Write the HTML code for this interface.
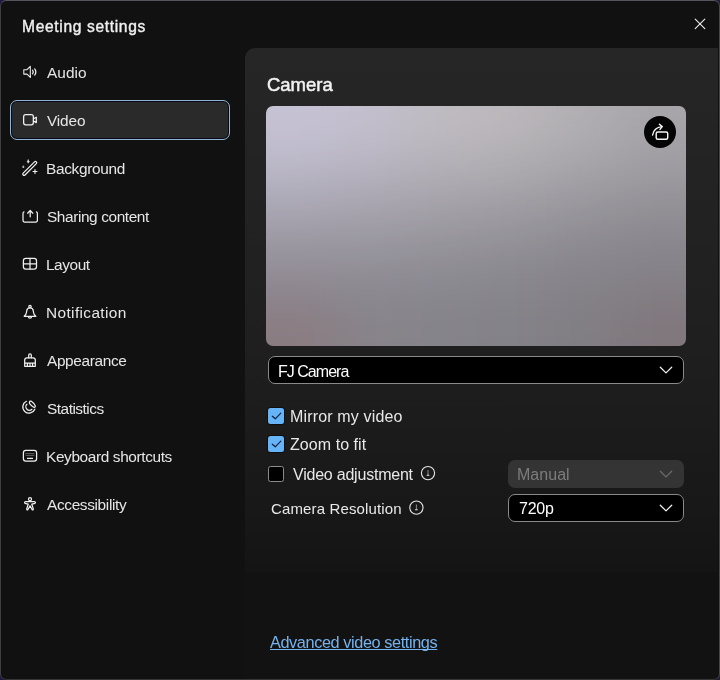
<!DOCTYPE html>
<html><head><meta charset="utf-8">
<style>
*{box-sizing:border-box;margin:0;padding:0}
html,body{width:720px;height:680px;overflow:hidden;background:#1d1b42}
body{position:relative;font-family:"Liberation Sans",sans-serif;color:#e8e8e8}
#win{position:absolute;left:0;top:0;width:720px;height:680px;border-radius:6px;background:#111111;overflow:hidden}
#frame{position:absolute;left:0;top:0;width:720px;height:680px;border:1px solid #3e3e40;border-top-color:#56565f;border-right-color:#45455a;border-bottom-color:#353535;border-radius:6px;pointer-events:none}
.t{position:absolute;white-space:nowrap;line-height:1;will-change:transform}
#panel{position:absolute;left:245px;top:48px;width:473px;height:640px;border-top-left-radius:10px;background:linear-gradient(#262626 0px,#1f1f1f 300px,#181818 460px,#141414 524px,#121212 524px)}
#sel{position:absolute;left:10px;top:100px;width:220px;height:40px;border-radius:7px;background:#2a2a2a;border:1px solid #93b4d0;box-shadow:inset 0 0 0 1px #050a18}
.dd{position:absolute;background:#000;border:1px solid #8a8a8a;border-radius:7px}
.cb{position:absolute;left:268px;width:16px;height:16px;border-radius:2.5px}
.cb.on{background:#66b3f8;box-shadow:0 0 0 1px rgba(0,0,0,0.45)}
.cb.off{background:#000;border:1px solid #8c8c8c}
svg{position:absolute;left:0;top:0;overflow:visible}
</style></head><body>
<div id="win">
  <div id="sel"></div>
  <div id="panel"></div>
  <svg width="420" height="240" style="position:absolute;left:266px;top:106px;overflow:hidden">
    <defs><filter id="bl" x="-50%" y="-50%" width="200%" height="200%"><feGaussianBlur stdDeviation="28"/></filter>
    <clipPath id="cc"><rect x="0" y="0" width="420" height="240" rx="7"/></clipPath></defs>
    <g clip-path="url(#cc)"><g filter="url(#bl)"><rect x="-80.0" y="-80.0" width="150.5" height="128.5" fill="#c6c2d4"/><rect x="70.0" y="-80.0" width="70.5" height="128.5" fill="#c3bfcd"/><rect x="140.0" y="-80.0" width="70.5" height="128.5" fill="#bfbbc1"/><rect x="210.0" y="-80.0" width="70.5" height="128.5" fill="#bbb7bb"/><rect x="280.0" y="-80.0" width="70.5" height="128.5" fill="#b2afb4"/><rect x="350.0" y="-80.0" width="150.5" height="128.5" fill="#a7a5aa"/><rect x="-80.0" y="48.0" width="150.5" height="48.5" fill="#b6b3c2"/><rect x="70.0" y="48.0" width="70.5" height="48.5" fill="#b3afbb"/><rect x="140.0" y="48.0" width="70.5" height="48.5" fill="#afacb3"/><rect x="210.0" y="48.0" width="70.5" height="48.5" fill="#aaa7ad"/><rect x="280.0" y="48.0" width="70.5" height="48.5" fill="#a2a0a5"/><rect x="350.0" y="48.0" width="150.5" height="48.5" fill="#9b999e"/><rect x="-80.0" y="96.0" width="150.5" height="48.5" fill="#a19ea8"/><rect x="70.0" y="96.0" width="70.5" height="48.5" fill="#9e9ba4"/><rect x="140.0" y="96.0" width="70.5" height="48.5" fill="#9b99a0"/><rect x="210.0" y="96.0" width="70.5" height="48.5" fill="#97959b"/><rect x="280.0" y="96.0" width="70.5" height="48.5" fill="#918f95"/><rect x="350.0" y="96.0" width="150.5" height="48.5" fill="#8c8a90"/><rect x="-80.0" y="144.0" width="150.5" height="48.5" fill="#8f8b94"/><rect x="70.0" y="144.0" width="70.5" height="48.5" fill="#8e8c94"/><rect x="140.0" y="144.0" width="70.5" height="48.5" fill="#8c8a91"/><rect x="210.0" y="144.0" width="70.5" height="48.5" fill="#89888e"/><rect x="280.0" y="144.0" width="70.5" height="48.5" fill="#86848a"/><rect x="350.0" y="144.0" width="150.5" height="48.5" fill="#848188"/><rect x="-80.0" y="192.0" width="150.5" height="128.5" fill="#8a7b81"/><rect x="70.0" y="192.0" width="70.5" height="128.5" fill="#878389"/><rect x="140.0" y="192.0" width="70.5" height="128.5" fill="#85838a"/><rect x="210.0" y="192.0" width="70.5" height="128.5" fill="#838287"/><rect x="280.0" y="192.0" width="70.5" height="128.5" fill="#817e83"/><rect x="350.0" y="192.0" width="150.5" height="128.5" fill="#80777b"/></g></g></svg>
  <div class="dd" style="left:268px;top:356px;width:416px;height:28px"></div>
  <div class="cb on" style="top:408px"></div>
  <div class="cb on" style="top:436px"></div>
  <div class="cb off" style="top:466px"></div>
  <div style="position:absolute;left:508px;top:460px;width:176px;height:28px;border-radius:7px;background:#343434"></div>
  <div class="dd" style="left:508px;top:494px;width:176px;height:28px"></div>

<div class="t" style="left:21.80px;top:18.59px;font-size:15.6px;font-weight:400;color:#f0f0f0;letter-spacing:0.650px;-webkit-text-stroke:0.4px #f0f0f0">Meeting settings</div>
<div class="t" style="left:46.70px;top:64.96px;font-size:15.4px;font-weight:400;color:#e6e6e6;letter-spacing:0.049px;">Audio</div>
<div class="t" style="left:46.70px;top:112.96px;font-size:15.4px;font-weight:400;color:#e6e6e6;letter-spacing:-0.156px;">Video</div>
<div class="t" style="left:45.80px;top:160.96px;font-size:15.4px;font-weight:400;color:#e6e6e6;letter-spacing:-0.320px;">Background</div>
<div class="t" style="left:46.70px;top:208.96px;font-size:15.4px;font-weight:400;color:#e6e6e6;letter-spacing:-0.395px;">Sharing content</div>
<div class="t" style="left:45.70px;top:256.96px;font-size:15.4px;font-weight:400;color:#e6e6e6;letter-spacing:-0.437px;">Layout</div>
<div class="t" style="left:45.70px;top:304.96px;font-size:15.4px;font-weight:400;color:#e6e6e6;letter-spacing:0.380px;">Notification</div>
<div class="t" style="left:46.70px;top:352.96px;font-size:15.4px;font-weight:400;color:#e6e6e6;letter-spacing:-0.355px;">Appearance</div>
<div class="t" style="left:46.70px;top:400.96px;font-size:15.4px;font-weight:400;color:#e6e6e6;letter-spacing:-0.487px;">Statistics</div>
<div class="t" style="left:45.80px;top:448.96px;font-size:15.4px;font-weight:400;color:#e6e6e6;letter-spacing:-0.371px;">Keyboard shortcuts</div>
<div class="t" style="left:46.80px;top:496.96px;font-size:15.4px;font-weight:400;color:#e6e6e6;letter-spacing:-0.343px;">Accessibility</div>
<div class="t" style="left:266.90px;top:76.14px;font-size:18.5px;font-weight:400;color:#f2f2f2;letter-spacing:-0.022px;-webkit-text-stroke:0.5px #f2f2f2">Camera</div>
<div class="t" style="left:277.90px;top:363.56px;font-size:16.0px;font-weight:400;color:#ffffff;letter-spacing:-0.978px;">FJ Camera</div>
<div class="t" style="left:289.80px;top:408.86px;font-size:16.0px;font-weight:400;color:#e8e8e8;letter-spacing:0.155px;">Mirror my video</div>
<div class="t" style="left:290.40px;top:436.96px;font-size:16.0px;font-weight:400;color:#e8e8e8;letter-spacing:0.057px;">Zoom to fit</div>
<div class="t" style="left:292.60px;top:467.06px;font-size:16.0px;font-weight:400;color:#e8e8e8;letter-spacing:-0.220px;">Video adjustment</div>
<div class="t" style="left:270.70px;top:501.20px;font-size:15.0px;font-weight:400;color:#e8e8e8;letter-spacing:0.137px;">Camera Resolution</div>
<div class="t" style="left:517.30px;top:467.16px;font-size:16.0px;font-weight:400;color:#7c7c7c;letter-spacing:0.036px;">Manual</div>
<div class="t" style="left:518.90px;top:500.86px;font-size:16.0px;font-weight:400;color:#ffffff;letter-spacing:-0.232px;">720p</div>
<div class="t" style="left:270.25px;top:634.20px;font-size:16.3px;font-weight:400;color:#76b3ee;letter-spacing:-0.402px;text-decoration:underline;text-decoration-skip-ink:none;text-underline-offset:1px">Advanced video settings</div>

  <svg width="720" height="680">
    <g stroke="#f0f0f0" stroke-width="1.1" fill="none" stroke-linecap="round">
      <line x1="695.2" y1="19.1" x2="704.8" y2="28.6"/><line x1="704.8" y1="19.1" x2="695.2" y2="28.6"/>
    </g>
    <g stroke="#f0f0f0" stroke-width="1.25" fill="none" stroke-linecap="round" stroke-linejoin="round">
      <!-- audio -->
      <path d="M23.8,69.7 H27 L30.3,66.3 V77.4 L27,74.1 H23.8 Z" stroke-width="1.05"/>
      <path d="M32.6,70.2 Q33.9,72 32.6,73.8"/>
      <path d="M34.7,68.9 Q37,72 34.7,75.1"/>
      <!-- video -->
      <rect x="23.65" y="114.7" width="9.7" height="10.1" rx="2"/>
      <path d="M33.4,118.8 L36.3,117.2 V122.6 L33.4,121"/>
      <!-- background wand -->
      <g transform="translate(29.75,168.4) rotate(-45)">
        <rect x="-9.3" y="-1.3" width="18.6" height="2.6" rx="1.3"/>
      </g>
      <path d="M28.2,159.9 Q28.5,161.3 29.5,161.6 Q28.5,161.9 28.2,163.3 Q27.9,161.9 26.9,161.6 Q27.9,161.3 28.2,159.9 Z" fill="#f0f0f0" stroke-width="0.5"/>
      <path d="M23.3,166 Q23.5,166.8 24.3,167 Q23.5,167.2 23.3,168 Q23.1,167.2 22.3,167 Q23.1,166.8 23.3,166 Z" fill="#f0f0f0" stroke-width="0.4"/>
      <path d="M33,171.5 H37 M35,169.5 V173.5" stroke-width="1.15"/>
      <!-- sharing -->
      <path d="M24,211.8 Q23,212 23,213.5 V220.6 Q23,222 24.4,222 H36 Q37.4,222 37.4,220.6 V213.5 Q37.4,212 36.4,211.8"/>
      <path d="M30.2,216.8 V210.6 M27.6,213.2 L30.2,210.4 L32.8,213.2"/>
      <!-- layout -->
      <rect x="23.4" y="258.4" width="13.1" height="10.7" rx="2.4"/>
      <path d="M30,258.4 V269.1 M23.4,263.8 H36.5"/>
      <!-- notification -->
      <circle cx="30" cy="306.6" r="1.2"/>
      <path d="M24.2,316.3 Q26.2,314.8 26.5,312.2 L26.7,310.9 Q27,307.9 30,307.9 Q33,307.9 33.3,310.9 L33.5,312.2 Q33.8,314.8 35.8,316.3 Z"/>
      <path d="M28.4,316.5 Q28.4,318.2 30,318.2 Q31.6,318.2 31.6,316.5"/>
      <!-- appearance -->
      <path d="M28.7,357.8 V355.3 Q28.7,353.9 30,353.9 Q31.3,353.9 31.3,355.3 V357.8"/>
      <path d="M24.7,366.3 V360.1 Q24.7,357.8 27,357.8 H33 Q35.3,357.8 35.3,360.1 V366.3 Z"/>
      <path d="M24.7,363.2 H35.3 M27.4,363.2 V366.3 M30,363.2 V366.3 M32.6,363.2 V366.3"/>
      <!-- statistics -->
      <path d="M26.4,401.3 A6.2,6.2 0 1 0 34.8,409.2"/>
      <path d="M26.9,404.3 A3.4,3.4 0 1 0 31.9,409.3"/>
      <path d="M29.4,402.4 Q29.6,400.4 31.6,401.4 Q34.6,403.4 35.2,405.6 Q35.6,407.6 33.6,407.2 Q31.6,406.2 29.6,403.6 Z"/>
      <!-- keyboard -->
      <rect x="23.4" y="450.4" width="13.2" height="10.7" rx="2.4"/>
      <path d="M25.6,453.6 H34.4 M26,455.4 H34" stroke-width="0.6" stroke-dasharray="0.9 0.6" opacity="0.55"/>
      <path d="M27.5,458.4 H32.5" stroke-width="1.1"/>
      <!-- accessibility -->
      <circle cx="30" cy="499.2" r="1.5"/>
      <path d="M25.2,501.7 L34.8,501.7 Q35.9,502.4 35,503.3 L31.8,504.2 L33.3,508.9 Q33.4,510.3 32.2,509.8 L30,505.8 L27.8,509.8 Q26.6,510.3 26.7,508.9 L28.2,504.2 L25,503.3 Q24.1,502.4 25.2,501.7 Z"/>
    </g>
    <!-- rotate button -->
    <circle cx="660" cy="132" r="16" fill="#050505"/>
    <g stroke="#f6f6f6" stroke-width="1.45" fill="none" stroke-linecap="round" stroke-linejoin="round">
      <rect x="656.2" y="132" width="11.5" height="7.2" rx="1.5"/>
      <path d="M652.6,135 Q653.8,127.6 661.8,126.6"/>
      <path d="M659.4,124.3 L662.2,126.6 L660,129.4"/>
    </g>
    <!-- chevrons -->
    <g stroke="#f0f0f0" stroke-width="1.25" fill="none" stroke-linecap="round" stroke-linejoin="round">
      <path d="M660.3,367.2 L666,372.9 L671.7,367.2"/>
      <path d="M660.3,505.2 L666,510.9 L671.7,505.2"/>
    </g>
    <path d="M660.3,471.2 L666,476.9 L671.7,471.2" stroke="#6c6c6c" stroke-width="1.25" fill="none" stroke-linecap="round" stroke-linejoin="round"/>
    <!-- checkmarks -->
    <g stroke="#0c1f3c" stroke-width="1.2" fill="none" stroke-linecap="round" stroke-linejoin="round">
      <path d="M272.3,416.2 L275.3,418.8 L280.8,413.2"/>
      <path d="M272.3,444.2 L275.3,446.8 L280.8,441.2"/>
    </g>
    <!-- info icons -->
    <g stroke="#e8e8e8" stroke-width="1.1" fill="none" stroke-linecap="round">
      <circle cx="428" cy="473.1" r="6.6"/>
      <path d="M428,470.4 V474.6" stroke-width="0.75" opacity="0.75"/><path d="M427.1,475.3 H428.9" stroke-width="1.1"/>
      <circle cx="416.4" cy="507.6" r="6.6"/>
      <path d="M416.4,504.9 V509.1" stroke-width="0.75" opacity="0.75"/><path d="M415.5,509.8 H417.3" stroke-width="1.1"/>
    </g>
  </svg>
</div>
<div id="frame"></div>
</body></html>
